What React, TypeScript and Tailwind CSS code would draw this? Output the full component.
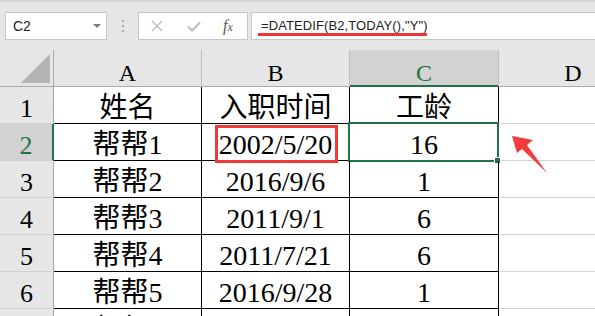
const cellFont = "font-['Liberation_Serif','Noto_Sans_CJK_SC',serif]";

type Row = { n: number; a: string; b: string; c: string };

const rows: Row[] = [
  { n: 1, a: "姓名", b: "入职时间", c: "工龄" },
  { n: 2, a: "帮帮1", b: "2002/5/20", c: "16" },
  { n: 3, a: "帮帮2", b: "2016/9/6", c: "1" },
  { n: 4, a: "帮帮3", b: "2011/9/1", c: "6" },
  { n: 5, a: "帮帮4", b: "2011/7/21", c: "6" },
  { n: 6, a: "帮帮5", b: "2016/9/28", c: "1" },
  { n: 7, a: "帮帮6", b: "", c: "" },
];

function FormulaBar() {
  return (
    <div className="h-[50px] bg-[#e6e6e6] border-t-2 border-[#d6d6d6] flex items-start pt-[10px] pl-[5px]">
      <div className="w-[102px] h-[28px] bg-white border border-[#c6c6c6] flex items-center justify-between pl-[7px] pr-[5px]">
        <span className="font-['Liberation_Sans',sans-serif] text-[14px] text-[#222]">C2</span>
        <svg width="8" height="5" viewBox="0 0 8 5">
          <polygon points="0,0 8,0 4,4" fill="#7a7a7a" />
        </svg>
      </div>
      <div className="w-[31px] h-[28px] flex flex-col items-center justify-center gap-[3px]">
        <span className="w-[2px] h-[2px] bg-[#a8a8a8]" />
        <span className="w-[2px] h-[2px] bg-[#a8a8a8]" />
        <span className="w-[2px] h-[2px] bg-[#a8a8a8]" />
      </div>
      <div className="w-[110px] h-[28px] bg-white border border-[#c6c6c6] flex items-center pl-[12px]">
        <svg width="12" height="12" viewBox="0 0 12 12">
          <path d="M1 1 L11 11 M11 1 L1 11" stroke="#bcbcbc" strokeWidth="1.4" />
        </svg>
        <svg width="14" height="11" viewBox="0 0 14 11" className="ml-[24px]">
          <path d="M1 5.5 L5 9.5 L13 1.5" stroke="#bcbcbc" strokeWidth="2" fill="none" />
        </svg>
        <span className="ml-[22px] font-['Liberation_Serif',serif] italic text-[16px] text-[#555] leading-none">
          f<span className="text-[12px]">x</span>
        </span>
      </div>
      <div className="ml-[3px] flex-1 h-[28px] bg-white border border-[#c6c6c6] border-r-0 relative flex items-center pl-[9px]">
        <span className="font-['Liberation_Sans',sans-serif] text-[13px] text-[#222] tracking-[0.1px]">
          =DATEDIF(B2,TODAY(),"Y")
        </span>
        <div className="absolute left-[6px] top-[20px] w-[169px] h-[3px] bg-[#ee3434]" />
      </div>
    </div>
  );
}

function HeaderRow() {
  const cols = [
    { k: "A", w: "w-[148px]" },
    { k: "B", w: "w-[148px]" },
    { k: "C", w: "w-[149px]" },
  ];
  return (
    <div className="flex h-[37px]">
      <div className="w-[54px] shrink-0 bg-[#e6e6e6] border-r border-b border-[#ababab]">
        <svg width="53" height="36" viewBox="0 0 53 36">
          <polygon points="50,4 50,33 21,33" fill="#b4b4b4" />
        </svg>
      </div>
      {cols.map((c) =>
        c.k === "C" ? (
          <div
            key={c.k}
            className={`${c.w} shrink-0 bg-[#d2d2d2] border-r border-[#bdbdbd] border-b-2 border-b-[#217346] flex items-end justify-center ${cellFont} text-[24px] leading-none text-[#217346]`}
          >
            {c.k}
          </div>
        ) : (
          <div
            key={c.k}
            className={`${c.w} shrink-0 bg-[#e6e6e6] border-r border-[#bdbdbd] border-b border-b-[#ababab] flex items-end justify-center pb-[1px] ${cellFont} text-[24px] leading-none text-black`}
          >
            {c.k}
          </div>
        )
      )}
      <div className="w-[148px] shrink-0 bg-[#e6e6e6] border-b border-[#ababab] flex items-end justify-center pb-[1px] font-['Liberation_Serif',serif] text-[24px] leading-none text-black">
        D
      </div>
    </div>
  );
}

function DataRow({ r }: { r: Row }) {
  const sel = r.n === 2;
  const cell = `${cellFont} text-[28px] leading-none text-black flex items-end justify-center pb-[1px] border-r border-b border-black shrink-0`;
  return (
    <div className="flex h-[37px]">
      <div
        className={`w-[54px] shrink-0 border-b border-[#d0d0d0] flex items-end justify-center pb-[1px] ${cellFont} text-[26px] leading-none ${
          sel
            ? "bg-[#d2d2d2] text-[#217346] border-r-2 border-r-[#217346]"
            : "bg-[#e6e6e6] text-black border-r border-r-[#ababab]"
        }`}
      >
        {r.n}
      </div>
      <div className={`w-[148px] ${cell}`}>{r.a}</div>
      <div className={`relative w-[148px] ${cell}`}>
        {r.b}
        {sel && <div className="absolute left-[13px] top-[1px] w-[123px] h-[38px] border-[3px] border-[#ef3a3a]" />}
      </div>
      <div className={`relative w-[149px] ${cell}`}>
        {r.c}
        {sel && (
          <>
            <div className="absolute left-[-2px] top-[-2px] w-[151px] h-[40px] border-2 border-[#217346]" />
            <div className="absolute left-[144px] top-[33px] w-[7px] h-[7px] bg-[#217346] border border-white" />
          </>
        )}
      </div>
      <div className="flex-1 border-b border-[#d4d4d4]" />
    </div>
  );
}

export default function App() {
  return (
    <div className="relative w-[595px] h-[316px] overflow-hidden bg-white">
      <FormulaBar />
      <HeaderRow />
      {rows.map((r) => (
        <DataRow key={r.n} r={r} />
      ))}
      <svg className="absolute left-[505px] top-[130px]" width="50" height="50" viewBox="0 0 50 50">
        <polygon points="7,6 28,10 22,15 42,43 17,19 12,23" fill="#f53b3b" />
      </svg>
    </div>
  );
}
